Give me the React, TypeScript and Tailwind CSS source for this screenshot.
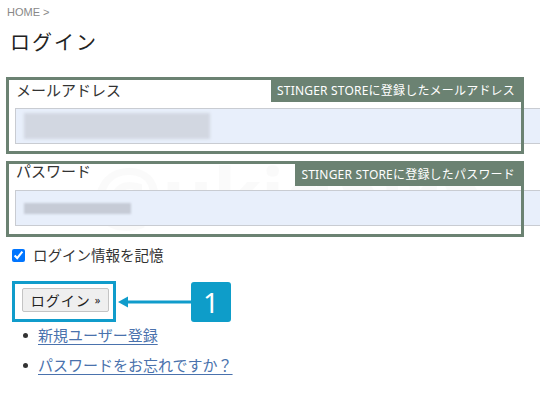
import React from 'react';

const Field: React.FC<{ label: string; tag: string; blur: React.ReactNode; className?: string; top: string; gap: string }> = ({ label, tag, blur, className, top, gap }) => {
    return (
        <div className={`relative ${className ?? ''}`}>
            <div className={`flex flex-col pl-[9px] ${top}`}>
                <label className="text-[15px] leading-[20px] text-[#333] pl-[1px]">{label}</label>
                <div className={`${gap} h-[36px] w-[540px] bg-[#e8effb] border border-[#c9ccd2] flex items-center pl-[8px] overflow-hidden`}>
                    {blur}
                </div>
            </div>
            {/* annotation frame */}
            <div className="absolute inset-0 border-[3px] border-[#6b8272] pointer-events-none">
                <div className="absolute top-0 right-0 h-[22px] bg-[#6b8272] text-white text-[12px] leading-[22px] px-[6px] whitespace-nowrap tracking-[0.2px]">
                    {tag}
                </div>
            </div>
        </div>
    );
};

const App: React.FC = () => {
    return (
        <div
            className="relative w-[540px] h-[405px] overflow-hidden bg-white text-[#333]"
            style={{ fontFamily: '"Noto Sans", "Noto Sans CJK JP", sans-serif' }}
        >
            {/* watermark */}
            <div className="absolute left-[92px] top-[150px] text-[78px] leading-[90px] font-bold text-black/[0.02] pointer-events-none select-none">
                @ukidaira
            </div>

            <div className="relative px-[6px] flex flex-col">
                <div className="pl-[1px] pt-[5px] text-[11px] leading-[14px] text-[#888]" style={{ fontFamily: '"Liberation Sans", sans-serif' }}>
                    HOME &gt;
                </div>

                <h1
                    className="pl-[4px] mt-[10px] text-[20px] leading-[28px] font-normal tracking-[2px] text-[#222]"
                    style={{ fontFamily: '"Liberation Serif", "Noto Sans CJK JP", serif' }}
                >
                    ログイン
                </h1>

                <Field
                    className="mt-[20px] w-[518px] h-[77px]"
                    top="pt-[3px]"
                    gap="mt-[8px]"
                    label="メールアドレス"
                    tag="STINGER STOREに登録したメールアドレス"
                    blur={<div className="w-[186px] h-[26px] bg-[#d2d7e1] blur-[1.5px]" />}
                />

                <Field
                    className="mt-[7px] w-[518px] h-[76px]"
                    top="pt-[0px]"
                    gap="mt-[9px]"
                    label="パスワード"
                    tag="STINGER STOREに登録したパスワード"
                    blur={<div className="w-[107px] h-[11px] bg-[#c6cbd6] blur-[1px]" />}
                />

                <label className="mt-[8px] ml-[6px] flex items-center gap-[8px] text-[14.5px] leading-[20px]">
                    <input type="checkbox" defaultChecked className="w-[13px] h-[13px] m-0" />
                    <span>ログイン情報を記憶</span>
                </label>

                <div className="mt-[16px] ml-[6px] flex items-center">
                    <div className="border-[3px] border-[#109ccb] pl-[7px] pr-[4px] pt-[4px] pb-[7px]">
                        <button className="h-[24px] w-[87px] bg-[#efefef] border border-[#c4c4c4] rounded-[2px] text-[14px] text-[#222] flex items-center justify-center gap-[4px]">
                            <span className="tracking-[1px]">ログイン</span>
                            <span className="text-[11px]">»</span>
                        </button>
                    </div>
                    <svg width="74" height="20" viewBox="0 0 74 20" className="ml-[1px]">
                        <line x1="10" y1="10" x2="74" y2="10" stroke="#109ccb" strokeWidth="3" />
                        <polygon points="1,10 11,4.5 11,15.5" fill="#109ccb" />
                    </svg>
                    <div className="w-[40px] h-[40px] rounded-[3px] bg-[#0e9dc9] text-white flex items-center justify-center text-[28px] leading-none">
                        1
                    </div>
                </div>

                <ul className="mt-[2px] flex flex-col gap-[8px]">
                    {['新規ユーザー登録', 'パスワードをお忘れですか？'].map((t) => (
                        <li key={t} className="flex items-center h-[22px]">
                            <span className="ml-[17px] w-[5px] h-[5px] rounded-full bg-[#333]" />
                            <a href="#" className="ml-[10px] text-[15px] leading-[22px] text-[#4a72ad] underline underline-offset-[3px]">
                                {t}
                            </a>
                        </li>
                    ))}
                </ul>
            </div>
        </div>
    );
};

export default App;
